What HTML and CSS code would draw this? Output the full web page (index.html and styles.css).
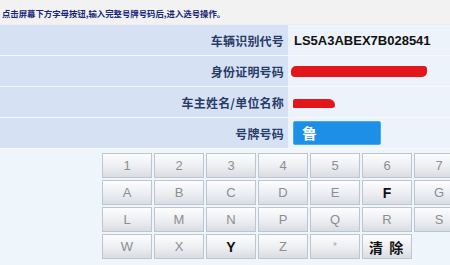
FILE: index.html
```html
<!DOCTYPE html>
<html lang="zh">
<head>
<meta charset="utf-8">
<link rel="stylesheet" href="styles.css">
</head>
<body>
<div class="page">
  <div class="notice">点击屏幕下方字母按钮,输入完整号牌号码后,进入选号操作。</div>
  <div class="form">
    <div class="label">车辆识别代号</div>
    <div class="value"><span class="vin">LS5A3ABEX7B028541</span></div>
    <div class="label">身份证明号码</div>
    <div class="value"><span class="redact redact-long"></span></div>
    <div class="label">车主姓名/单位名称</div>
    <div class="value"><span class="redact redact-short"></span></div>
    <div class="label">号牌号码</div>
    <div class="value"><span class="plate">鲁</span></div>
  </div>
  <div class="keyboard">
    <div class="key">1</div><div class="key">2</div><div class="key">3</div><div class="key">4</div><div class="key">5</div><div class="key">6</div><div class="key">7</div>
    <div class="key">A</div><div class="key">B</div><div class="key">C</div><div class="key">D</div><div class="key">E</div><div class="key key-on">F</div><div class="key">G</div>
    <div class="key">L</div><div class="key">M</div><div class="key">N</div><div class="key">P</div><div class="key">Q</div><div class="key">R</div><div class="key">S</div>
    <div class="key">W</div><div class="key">X</div><div class="key key-on">Y</div><div class="key">Z</div><div class="key key-star">*</div><div class="key key-clear">清&nbsp;&nbsp;除</div>
  </div>
</div>
</body>
</html>
```
FILE: styles.css
```css
html, body {
  margin: 0;
  padding: 0;
}
body {
  width: 450px;
  height: 265px;
  overflow: hidden;
  background: #eef5fb;
  font-family: "Liberation Sans", "Noto Sans CJK SC", sans-serif;
}
.page {
  width: 450px;
  height: 265px;
  overflow: hidden;
}
.notice {
  height: 18px;
  padding: 6px 0 0 2px;
  background: #f2f2f2;
  color: #18267a;
  font-family: "Noto Sans CJK SC", sans-serif;
  font-weight: bold;
  font-size: 8.4px;
  line-height: 14px;
  white-space: nowrap;
  border-bottom: 1px solid #e8eef6;
}
.form {
  display: grid;
  grid-template-columns: 288px 162px;
  grid-auto-rows: 30px;
  row-gap: 1px;
  background: #f6f9fd;
  padding-bottom: 1px;
}
.label {
  background: #d6e2f3;
  color: #283c68;
  font-family: "Noto Sans CJK SC", sans-serif;
  font-weight: bold;
  font-size: 12px;
  letter-spacing: 0.2px;
  display: flex;
  align-items: center;
  justify-content: flex-end;
  padding-right: 4px;
}
.value {
  background: #edf3fa;
  display: flex;
  align-items: center;
  padding-left: 5px;
}
.vin {
  font-family: "Liberation Sans", sans-serif;
  font-weight: bold;
  font-size: 13px;
  color: #111;
  padding-left: 1px;
}
.redact {
  display: block;
  background: #e3161b;
}
.redact-long {
  width: 136px;
  height: 11px;
  margin-left: -2px;
  margin-top: 1px;
  border-radius: 5px 3px 5px 4px;
}
.redact-short {
  width: 42px;
  height: 9px;
  margin-top: 2px;
  border-radius: 2px 6px 3px 1px;
}
.plate {
  box-sizing: border-box;
  width: 88px;
  height: 24px;
  background: #1d8fe6;
  border: 1px solid #4aa8ee;
  border-radius: 2px;
  color: #fff;
  font-family: "Noto Sans CJK SC", sans-serif;
  font-weight: bold;
  font-size: 15px;
  line-height: 21px;
  padding-left: 8px;
}
.keyboard {
  display: grid;
  grid-template-columns: repeat(7, 50px);
  grid-auto-rows: 25px;
  gap: 2px;
  margin-top: 4px;
  padding-left: 102px;
  width: 464px;
}
.key {
  box-sizing: border-box;
  border: 1px solid #bdc5cf;
  background: linear-gradient(#fdfdfe, #eceef2 55%, #d9dce2);
  color: #8e8e8e;
  font-family: "Liberation Sans", sans-serif;
  font-size: 13px;
  display: flex;
  align-items: center;
  justify-content: center;
}
.key-on {
  color: #111;
  font-weight: bold;
  font-size: 14px;
}
.key-star {
  font-size: 10px;
  color: #aaa;
}
.key-clear {
  color: #111;
  font-family: "Noto Sans CJK SC", sans-serif;
  font-weight: bold;
  font-size: 14px;
  justify-content: flex-start;
  padding-left: 6px;
}
```
